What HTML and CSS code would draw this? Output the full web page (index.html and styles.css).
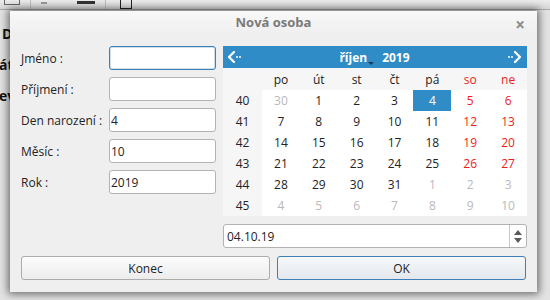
FILE: index.html
```html
<!DOCTYPE html>
<html>
<head>
  <meta charset="utf-8">
  <link rel="stylesheet" href="styles.css">
</head>
<body>
  <div class="app">
    <div class="toolbar">
      <span class="tb-icon tb-edit"></span>
      <span class="tb-sep"></span>
      <span class="tb-icon tb-small"></span>
      <span class="tb-icon tb-bar"></span>
      <span class="tb-sep"></span>
      <span class="tb-icon tb-box"></span>
    </div>
    <div class="app-side">
      <div class="side-line l1">D</div>
      <div class="side-line l2">át</div>
      <div class="side-line l3">ev</div>
    </div>
  </div>

  <div class="dialog">
    <div class="titlebar">
      <span class="title">Nová osoba</span>
      <span class="close">×</span>
    </div>

    <div class="dialog-body">
      <div class="top-row">
        <div class="form">
          <label class="form-row"><span class="form-label">Jméno :</span><input class="field focused" type="text" value=""></label>
          <label class="form-row"><span class="form-label">Příjmení :</span><input class="field" type="text" value=""></label>
          <label class="form-row"><span class="form-label">Den narození :</span><input class="field" type="text" value="4"></label>
          <label class="form-row"><span class="form-label">Měsíc :</span><input class="field" type="text" value="10"></label>
          <label class="form-row"><span class="form-label">Rok :</span><input class="field" type="text" value="2019"></label>
        </div>

        <div class="date-side">
          <div class="calendar">
            <div class="cal-nav">
              <svg class="nav-arrow" width="18" height="14" viewBox="0 0 18 14">
                <path d="M8 2 L3 7 L8 12" fill="none" stroke="#fff" stroke-width="2.2" stroke-linecap="round" stroke-linejoin="round"/>
                <circle cx="11" cy="7" r="1" fill="#fff"/>
                <circle cx="14" cy="7" r="1" fill="#fff"/>
              </svg>
              <div class="cal-title">
                <span class="month">říjen<span class="month-drop"></span></span>
                <span class="year">2019</span>
              </div>
              <svg class="nav-arrow" width="18" height="14" viewBox="0 0 18 14">
                <circle cx="4" cy="7" r="1" fill="#fff"/>
                <circle cx="7" cy="7" r="1" fill="#fff"/>
                <path d="M10 2 L15 7 L10 12" fill="none" stroke="#fff" stroke-width="2.2" stroke-linecap="round" stroke-linejoin="round"/>
              </svg>
            </div>
            <div class="cal-grid">
              <div class="head wk"></div>
              <div class="head">po</div><div class="head">út</div><div class="head">st</div><div class="head">čt</div><div class="head">pá</div><div class="head red">so</div><div class="head red">ne</div>

              <div class="wk">40</div>
              <div class="day other">30</div><div class="day">1</div><div class="day">2</div><div class="day">3</div><div class="day selected">4</div><div class="day red">5</div><div class="day red">6</div>

              <div class="wk">41</div>
              <div class="day">7</div><div class="day">8</div><div class="day">9</div><div class="day">10</div><div class="day">11</div><div class="day red">12</div><div class="day red">13</div>

              <div class="wk">42</div>
              <div class="day">14</div><div class="day">15</div><div class="day">16</div><div class="day">17</div><div class="day">18</div><div class="day red">19</div><div class="day red">20</div>

              <div class="wk">43</div>
              <div class="day">21</div><div class="day">22</div><div class="day">23</div><div class="day">24</div><div class="day">25</div><div class="day red">26</div><div class="day red">27</div>

              <div class="wk">44</div>
              <div class="day">28</div><div class="day">29</div><div class="day">30</div><div class="day">31</div><div class="day other">1</div><div class="day other">2</div><div class="day other">3</div>

              <div class="wk">45</div>
              <div class="day other">4</div><div class="day other">5</div><div class="day other">6</div><div class="day other">7</div><div class="day other">8</div><div class="day other">9</div><div class="day other">10</div>
            </div>
          </div>

          <div class="date-edit">
            <span class="date-text">04.10.19</span>
            <span class="spin">
              <span class="spin-up"></span>
              <span class="spin-down"></span>
            </span>
          </div>
        </div>
      </div>

      <div class="buttons">
        <button class="btn">Konec</button>
        <button class="btn default">OK</button>
      </div>
    </div>
  </div>
</body>
</html>
```

FILE: styles.css
```css
body {
  width: 550px;
  height: 300px;
  margin: 0;
  padding: 0;
  overflow: hidden;
  position: relative;
  font-family: "Open Sans", "Noto Sans", sans-serif;
  font-size: 12px;
  color: #232323;
  background: #e3e3e3;
}

/* background application */
.app {
  width: 550px;
  height: 300px;
}

.toolbar {
  height: 9px;
  display: flex;
  align-items: flex-end;
  gap: 10px;
  padding-left: 4px;
  background: linear-gradient(#ececec, #d6d6d6);
  border-bottom: 1px solid #a9a9a9;
  overflow: hidden;
}

.tb-icon {
  display: block;
}

.tb-edit {
  width: 14px;
  height: 4px;
  margin-bottom: 4px;
  border: 1px solid #666;
  border-top: none;
}

.tb-sep {
  width: 1px;
  height: 9px;
  background: #bdbdbd;
}

.tb-small {
  width: 6px;
  height: 2px;
  margin-bottom: 5px;
  background: #999;
}

.tb-bar {
  width: 18px;
  height: 3px;
  margin-bottom: 5px;
  margin-left: 20px;
  background: #333;
}

.tb-box {
  width: 10px;
  height: 9px;
  border: 1px solid #222;
  border-top: none;
  margin-left: 4px;
}

.app-side {
  margin-left: -1px;
  font-weight: bold;
  font-size: 14px;
  color: #111;
}

.side-line {
  height: 31px;
  line-height: 31px;
}

.l1 { margin-top: 8px; padding-left: 3px; }

/* dialog window */
.dialog {
  position: absolute;
  left: 10px;
  top: 11px;
  width: 527px;
  height: 281px;
  background: #efefef;
  box-shadow: 0 0 8px 2px rgba(0,0,0,0.55);
  display: flex;
  flex-direction: column;
}

.titlebar {
  height: 24px;
  position: relative;
  display: flex;
  align-items: center;
  justify-content: center;
  background: linear-gradient(#f9f9f9, #efefef);
}

.title {
  font-weight: bold;
  font-size: 13px;
  color: #7a7a7a;
}

.close {
  position: absolute;
  right: 12px;
  top: 2px;
  font-size: 17px;
  font-weight: bold;
  color: #8c8c8c;
}

.dialog-body {
  padding: 13px 10px 12px 11px;
  display: flex;
  flex-direction: column;
  gap: 8px;
}

.top-row {
  display: flex;
  gap: 7px;
}

.form {
  width: 195px;
  display: flex;
  flex-direction: column;
  gap: 7px;
}

.form-row {
  display: flex;
  align-items: center;
  height: 24px;
}

.form-label {
  width: 88px;
  flex: none;
}

.field {
  width: 107px;
  height: 24px;
  box-sizing: border-box;
  margin: 0;
  padding: 0 1px;
  border: 1px solid #b3b3b3;
  border-radius: 3px;
  background: #fff;
  font-family: inherit;
  font-size: 12px;
  color: #232323;
  outline: none;
}

.field.focused {
  border-color: #3d7fb6;
  box-shadow: inset 0 0 0 1px rgba(61,127,182,0.25);
}

/* calendar */
.date-side {
  width: 304px;
  display: flex;
  flex-direction: column;
  gap: 8px;
}

.calendar {
  background: #f6f6f6;
}

.cal-nav {
  height: 22px;
  display: flex;
  align-items: center;
  justify-content: space-between;
  padding: 0 4px 0 3px;
  background: #308cc6;
  color: #fff;
}

.cal-title {
  display: flex;
  gap: 15px;
  font-weight: bold;
  font-size: 12px;
}

.month {
  position: relative;
}

.month-drop {
  position: absolute;
  right: -7px;
  bottom: 1px;
  border-left: 3px solid transparent;
  border-right: 3px solid transparent;
  border-top: 3px solid #1e3a52;
}

.cal-grid {
  display: grid;
  grid-template-columns: 39px repeat(7, 1fr);
  grid-template-rows: 22px repeat(6, 21px);
  text-align: center;
}

.cal-grid > div {
  display: flex;
  align-items: center;
  justify-content: center;
}

.head {
  color: #232323;
}

.wk {
  color: #232323;
}

.day {
  background: #fff;
  color: #232323;
}

.day.other {
  color: #b9b9b9;
}

.red {
  color: #ee1c1c !important;
}

.day.selected {
  background: #308cc6;
  color: #fff;
}

.date-edit {
  height: 24px;
  box-sizing: border-box;
  display: flex;
  align-items: center;
  border: 1px solid #b3b3b3;
  border-radius: 3px;
  background: #fff;
}

.date-text {
  flex: 1;
  padding-left: 3px;
}

.spin {
  width: 16px;
  height: 100%;
  border-left: 1px solid #c8c8c8;
  display: flex;
  flex-direction: column;
  align-items: center;
  justify-content: center;
  gap: 3px;
}

.spin-up {
  border-left: 4px solid transparent;
  border-right: 4px solid transparent;
  border-bottom: 5px solid #5a5a5a;
}

.spin-down {
  border-left: 4px solid transparent;
  border-right: 4px solid transparent;
  border-top: 5px solid #5a5a5a;
}

/* buttons */
.buttons {
  display: flex;
  gap: 7px;
  padding-right: 1px;
}

.btn {
  flex: 1;
  height: 24px;
  margin: 0;
  border: 1px solid #acacac;
  border-radius: 3px;
  background: linear-gradient(#fcfcfc, #ececec);
  font-family: inherit;
  font-size: 12px;
  color: #232323;
}

.btn.default {
  border-color: #3d7fb6;
  background: linear-gradient(#f6f8fa, #e3e8ed);
}
```
